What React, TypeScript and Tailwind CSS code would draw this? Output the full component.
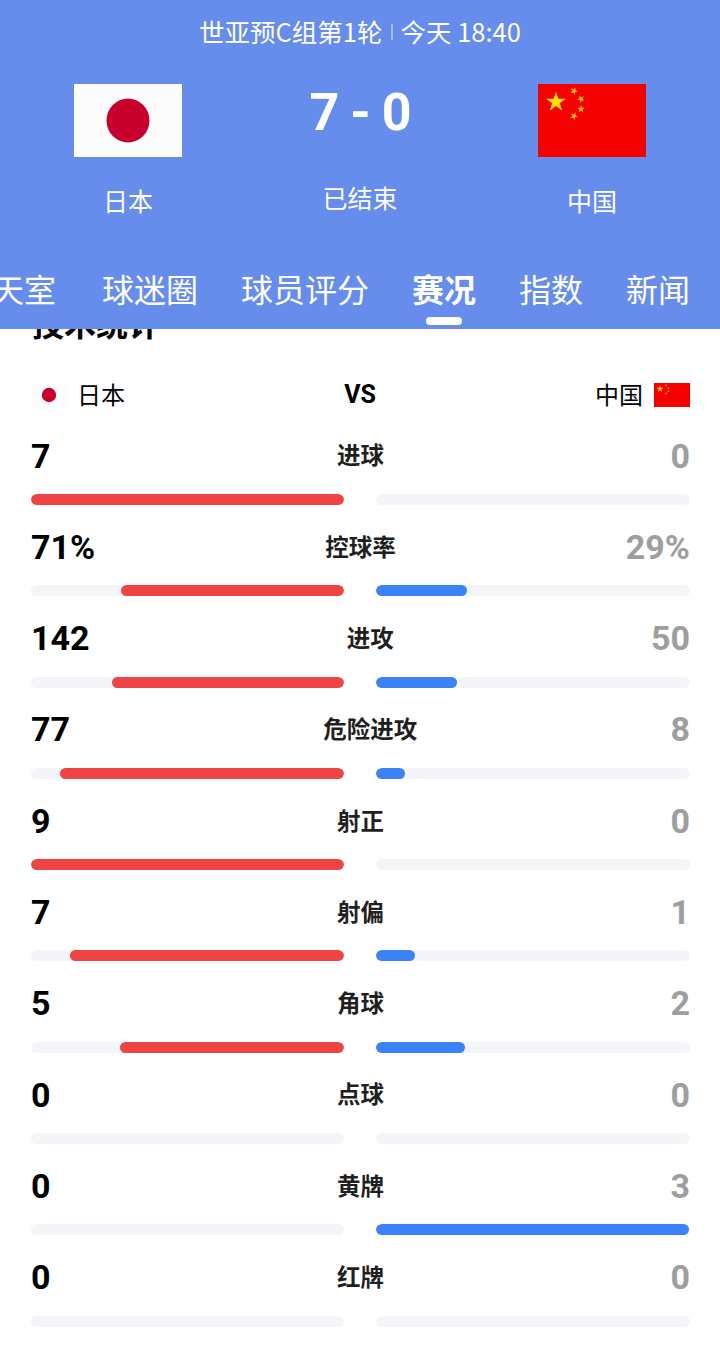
const stats = [
  { label: "进球", home: "7", away: "0", homeWidth: 313, awayWidth: 0 },
  { label: "控球率", home: "71%", away: "29%", homeWidth: 223, awayWidth: 91 },
  { label: "进攻", home: "142", away: "50", homeWidth: 232, awayWidth: 81 },
  { label: "危险进攻", home: "77", away: "8", homeWidth: 284, awayWidth: 29 },
  { label: "射正", home: "9", away: "0", homeWidth: 313, awayWidth: 0 },
  { label: "射偏", home: "7", away: "1", homeWidth: 274, awayWidth: 39 },
  { label: "角球", home: "5", away: "2", homeWidth: 224, awayWidth: 89 },
  { label: "点球", home: "0", away: "0", homeWidth: 0, awayWidth: 0 },
  { label: "黄牌", home: "0", away: "3", homeWidth: 0, awayWidth: 313 },
  { label: "红牌", home: "0", away: "0", homeWidth: 0, awayWidth: 0 },
];

const tabs = ["聊天室", "球迷圈", "球员评分", "赛况", "指数", "新闻"];

const star = (cx: number, cy: number, r: number, rot = 0) => {
  const pts: string[] = [];
  for (let i = 0; i < 10; i++) {
    const rad = i % 2 === 0 ? r : r * 0.382;
    const a = ((-90 + rot + i * 36) * Math.PI) / 180;
    pts.push(`${cx + rad * Math.cos(a)},${cy + rad * Math.sin(a)}`);
  }
  return pts.join(" ");
};

const ChinaFlag = ({ className }: { className: string }) => (
  <svg viewBox="0 0 108 73" preserveAspectRatio="none" className={className}>
    <rect width="108" height="73" fill="#f40000" />
    <polygon points={star(18, 18, 10.5)} fill="#ffde00" />
    <polygon points={star(36, 7, 4, 25)} fill="#ffc800" />
    <polygon points={star(43, 15, 4, 45)} fill="#ffc800" />
    <polygon points={star(43, 25, 4, 0)} fill="#ffc800" />
    <polygon points={star(36, 32, 4, 25)} fill="#ffc800" />
  </svg>
);

const JapanFlag = ({ className }: { className: string }) => (
  <svg viewBox="0 0 108 73" preserveAspectRatio="none" className={className}>
    <rect width="108" height="73" fill="#fcfcfc" />
    <ellipse cx="54" cy="36.5" rx="21.5" ry="22" fill="#c8002d" />
  </svg>
);

const StatRow = ({ label, home, away, homeWidth, awayWidth }: (typeof stats)[number]) => (
  <div className="h-[91.3px]">
    <div className="flex h-[46px] items-center justify-between">
      <span className="pl-[1px] text-[34px] font-bold text-black font-['Roboto']">{home}</span>
      <span className="pb-[2px] text-[23.5px] font-bold text-[#1f1f1f]">{label}</span>
      <span className="text-[34px] font-bold text-[#9e9e9e] font-['Roboto']">{away}</span>
    </div>
    <div className="mt-[15px] flex justify-between pl-[1px]">
      <div className="flex h-[11px] w-[313px] justify-end overflow-hidden rounded-full bg-[#f3f5f8]">
        <div className="rounded-full bg-[#ef4444]" style={{ width: homeWidth }} />
      </div>
      <div className="flex h-[11px] w-[314px] overflow-hidden rounded-full bg-[#f3f5f8]">
        <div className="rounded-full bg-[#3b82f6]" style={{ width: awayWidth }} />
      </div>
    </div>
  </div>
);

export default function App() {
  return (
    <div className="h-[1356px] w-[720px] overflow-hidden bg-white font-['Noto_Sans_CJK_SC',sans-serif]">
      <header className="relative z-10 h-[329px] bg-[#668cec] text-white">
        <div className="flex h-[66px] items-center justify-center pb-[3px] text-[25.5px] font-normal">
          <span>世亚预C组第1轮</span>
          <span className="mx-[8px] h-[16px] w-[2px] bg-white/40" />
          <span>今天 18:40</span>
        </div>
        <div className="flex justify-between px-[74px] pt-[18px]">
          <div className="flex w-[108px] flex-col items-center">
            <JapanFlag className="h-[73px] w-[108px]" />
            <span className="mt-[25px] text-[25px] font-normal">日本</span>
          </div>
          <div className="flex flex-col items-center">
            <span className="text-[52px] leading-[58px] font-bold font-['Roboto'] tracking-[-1px]">7 - 0</span>
            <span className="mt-[37px] text-[25px] font-normal">已结束</span>
          </div>
          <div className="flex w-[108px] flex-col items-center">
            <ChinaFlag className="h-[73px] w-[108px]" />
            <span className="mt-[25px] text-[25px] font-normal">中国</span>
          </div>
        </div>
        <nav className="mt-[45px] flex justify-end gap-[43px] overflow-hidden pr-[30px]">
          {tabs.map((tab) => (
            <div key={tab} className="flex shrink-0 flex-col items-center first:mr-[3px]">
              <span className={`text-[32px] leading-[46px] ${tab === "赛况" ? "font-bold" : "font-normal"}`}>
                {tab}
              </span>
              {tab === "赛况" && <div className="mt-[6px] h-[8px] w-[36px] rounded-full bg-white" />}
            </div>
          ))}
        </nav>
      </header>

      <main className="-mt-[27px] px-[30px]">
        <h2 className="pl-[2px] text-[32px] leading-[40px] font-bold text-black">技术统计</h2>
        <div className="mt-[41px] flex h-[24px] items-center justify-between">
          <div className="flex items-center gap-[10px] pl-[1px]">
            <JapanFlag className="h-[24px] w-[36px]" />
            <span className="pb-[2px] text-[24px] font-normal text-black">日本</span>
          </div>
          <span className="text-[25px] font-bold text-black font-['Roboto']">VS</span>
          <div className="flex items-center gap-[11px]">
            <span className="pb-[2px] text-[24px] font-normal text-black">中国</span>
            <ChinaFlag className="h-[24px] w-[36px]" />
          </div>
        </div>
        <div className="mt-[26px]">
          {stats.map((s) => (
            <StatRow key={s.label} {...s} />
          ))}
        </div>
      </main>
    </div>
  );
}
